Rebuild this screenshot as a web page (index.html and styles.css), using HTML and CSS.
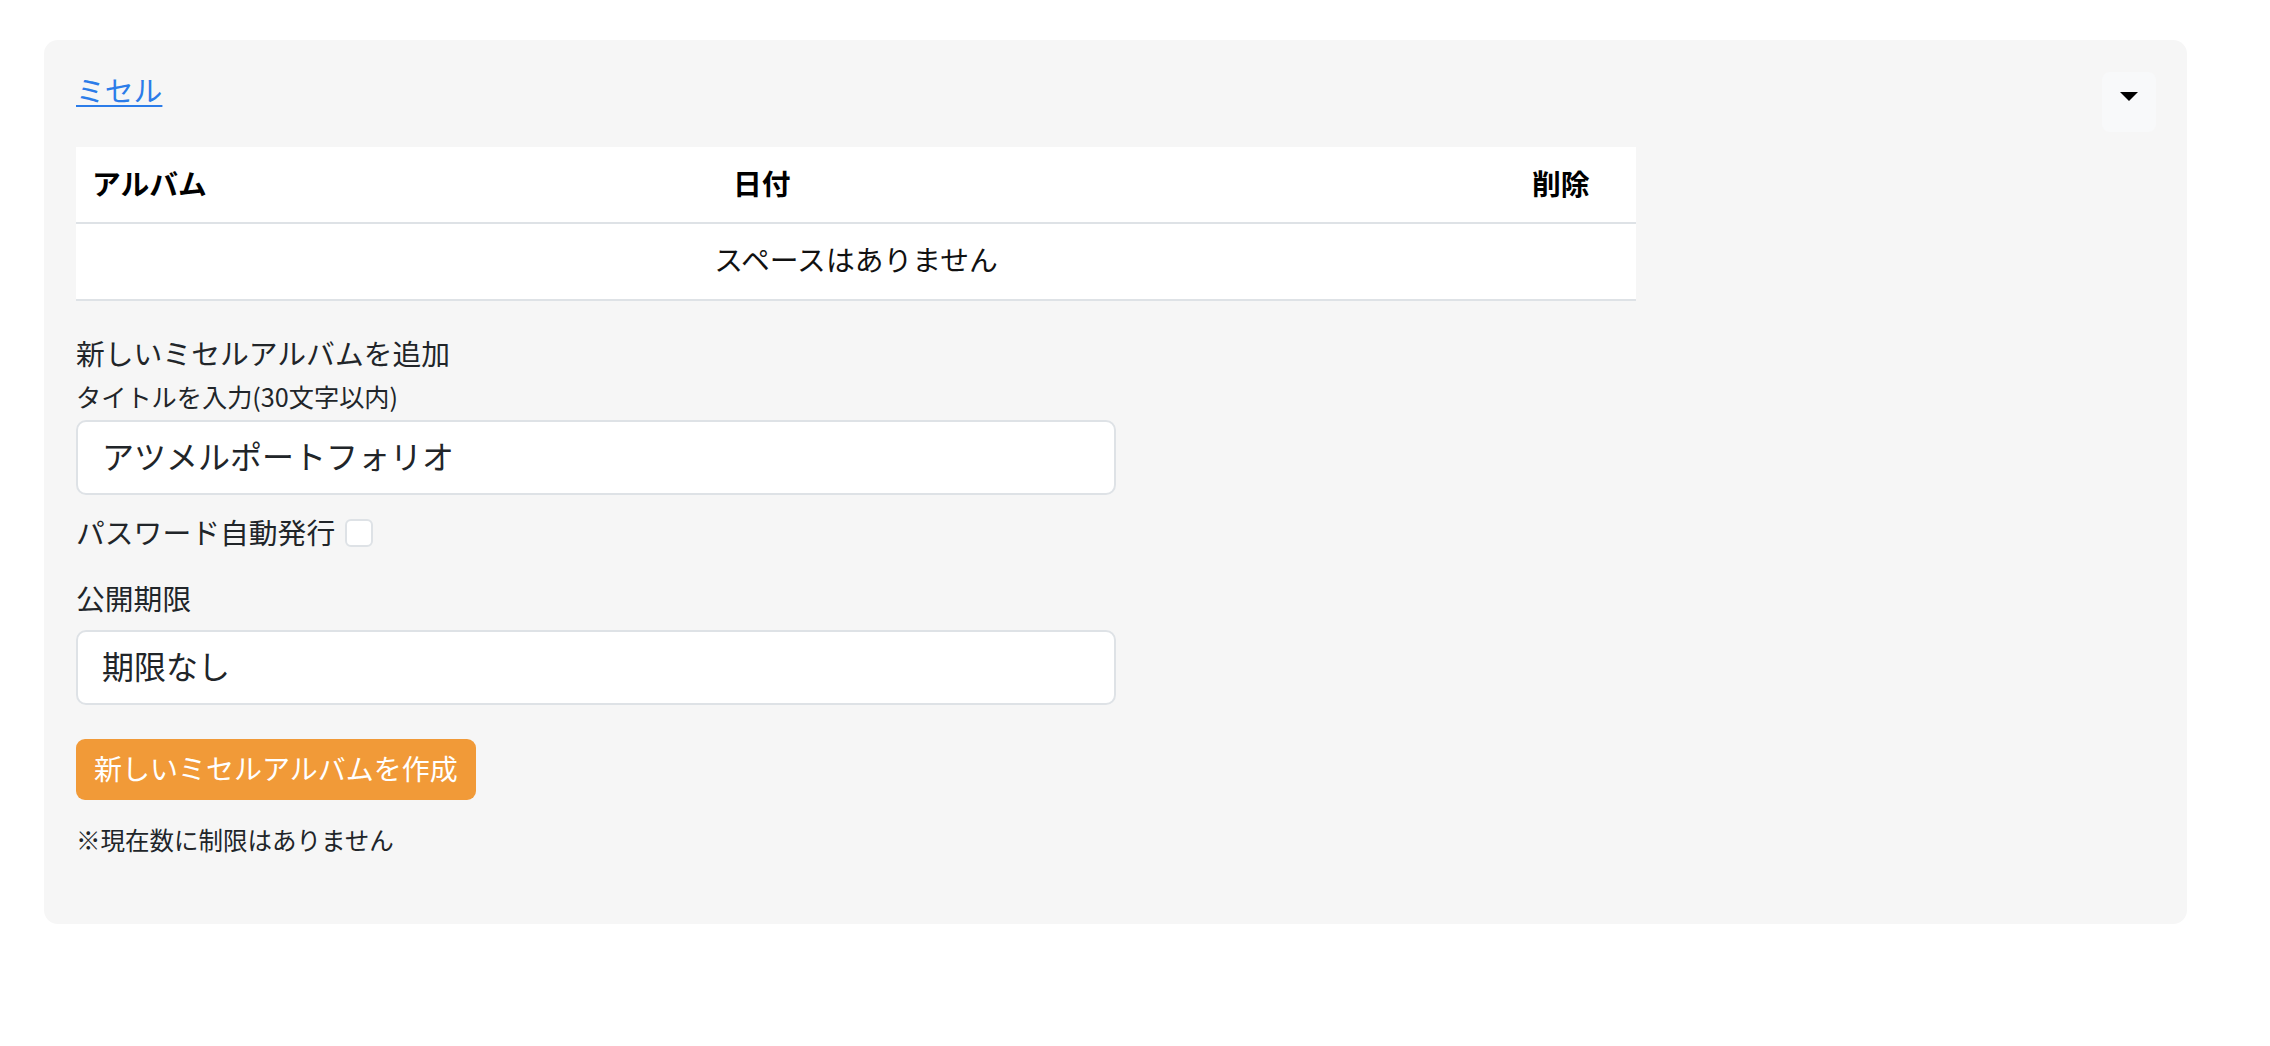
FILE: index.html
```html
<!DOCTYPE html>
<html lang="ja">
<head>
<meta charset="utf-8">
<title>ミセル</title>
<link rel="stylesheet" href="styles.css">
</head>
<body>
<div class="page">
  <section class="panel">
    <div class="panel-head">
      <a class="title-link" href="#">ミセル</a>
      <button class="toggle" type="button" aria-label="開閉"><span class="caret"></span></button>
    </div>
    <table class="album-table">
      <colgroup>
        <col class="col-album">
        <col class="col-date">
        <col class="col-del">
      </colgroup>
      <thead>
        <tr>
          <th>アルバム</th>
          <th>日付</th>
          <th>削除</th>
        </tr>
      </thead>
      <tbody>
        <tr>
          <td class="empty" colspan="3">スペースはありません</td>
        </tr>
      </tbody>
    </table>
    <p class="section-title">新しいミセルアルバムを追加</p>
    <p class="field-label">タイトルを入力(30文字以内)</p>
    <input class="text-input" type="text" value="アツメルポートフォリオ">
    <label class="check-row">パスワード自動発行<input class="check" type="checkbox"></label>
    <p class="section-title second">公開期限</p>
    <input class="text-input second-input" type="text" value="期限なし">
    <button class="create-btn" type="button">新しいミセルアルバムを作成</button>
    <p class="note">※現在数に制限はありません</p>
  </section>
</div>
</body>
</html>
```
FILE: styles.css
```css
html, body {
  margin: 0;
  padding: 0;
  background: #ffffff;
}

body {
  font-family: "Noto Sans CJK JP", "Noto Sans", sans-serif;
  color: #212529;
}

.page {
  padding: 40px 83px 0 44px;
}

.panel {
  background: #f6f6f6;
  border-radius: 14px;
  padding: 28px 31px 65px 32px;
}

.panel-head {
  display: flex;
  justify-content: space-between;
  align-items: flex-start;
  height: 64px;
}

.title-link {
  font-size: 28.8px;
  line-height: 43.2px;
  color: #2b7ce9;
  text-decoration: underline;
  text-decoration-thickness: 2px;
  text-underline-offset: 3px;
}

.toggle {
  width: 54px;
  height: 60px;
  margin-top: 4px;
  background: #f8f9fa;
  border: 0;
  border-radius: 8px;
  padding: 20px 0 0 0;
  box-sizing: border-box;
  display: flex;
  justify-content: center;
  align-items: flex-start;
}

.caret {
  display: block;
  width: 0;
  height: 0;
  border-top: 9px solid #000;
  border-left: 9px solid transparent;
  border-right: 9px solid transparent;
}

.album-table {
  width: 75%;
  margin-top: 15px;
  border-collapse: separate;
  border-spacing: 0;
  table-layout: fixed;
  background: #ffffff;
}

.col-album { width: 641px; }
.col-date { width: 799px; }
.col-del { width: 120px; }

.album-table th,
.album-table td {
  padding: 14px 16px 18px 16px;
  line-height: 43px;
  font-size: 28.8px;
  border-bottom: 2px solid #dee2e6;
  text-align: left;
  white-space: nowrap;
}

.album-table th {
  font-weight: 700;
  color: #000;
}

.album-table td.empty {
  padding-top: 13px;
  padding-bottom: 19px;
  text-align: center;
  color: #111;
}

.section-title {
  margin: 30px 0 0 0;
  font-size: 28.8px;
  line-height: 43.2px;
}

.section-title.second {
  margin-top: 23px;
}

.field-label {
  margin: 4px 0 0 0;
  font-size: 25.2px;
  line-height: 37.8px;
}

.text-input {
  display: block;
  width: 50%;
  height: 75px;
  margin: 4px 0 0 0;
  box-sizing: border-box;
  border: 2px solid #dee2e6;
  border-radius: 10px;
  background: #ffffff;
  padding: 0 24px 5px 24px;
  font-family: "Noto Sans CJK JP", "Noto Sans", sans-serif;
  font-size: 32px;
  color: #212529;
  outline: none;
}

.text-input.second-input {
  margin-top: 11px;
}

.check-row {
  display: flex;
  align-items: center;
  margin-top: 15px;
  font-size: 28.8px;
  line-height: 43.2px;
}

.check {
  appearance: none;
  -webkit-appearance: none;
  width: 28px;
  height: 28px;
  margin: 2px 0 0 10px;
  box-sizing: border-box;
  border: 2px solid #dee2e6;
  border-radius: 6px;
  background: #ffffff;
}

.create-btn {
  display: block;
  height: 61px;
  margin-top: 34px;
  padding: 0 18px 3px 18px;
  border: 0;
  border-radius: 9px;
  background: #f19a38;
  color: #ffffff;
  font-family: "Noto Sans CJK JP", "Noto Sans", sans-serif;
  font-size: 28px;
  line-height: 58px;
}

.note {
  margin: 22px 0 0 0;
  font-size: 24.5px;
  line-height: 36.75px;
}
```
